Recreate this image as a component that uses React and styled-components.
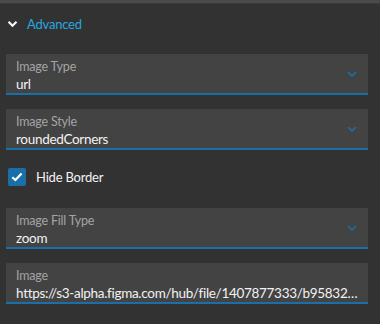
import React from 'react';
import styled, { createGlobalStyle } from 'styled-components';

const GlobalStyle = createGlobalStyle`
  html, body {
    margin: 0;
    padding: 0;
    background: #323232;
  }
  body {
    font-family: "Source Sans Pro", Lato, "Noto Sans", sans-serif;
  }
`;

const Panel = styled.div`
  width: 380px;
  height: 324px;
  background: #323232;
  overflow: hidden;
`;

const TopBar = styled.div`
  height: 3px;
  background: #4a4a4a;
  border-bottom: 1px solid #3b3b3b;
`;

const Body = styled.div`
  padding: 0 12px 0 6px;
`;

const Header = styled.div`
  height: 40px;
  display: flex;
  align-items: center;
  gap: 9px;
  padding-left: 1px;
  margin-bottom: 10px;
  color: #26a8e0;
  font-size: 13px;
  letter-spacing: -0.2px;
`;

const Field = styled.div`
  background: #434343;
  border-bottom: 2px solid #1b6fa8;
  padding: 5px 10px 0 10px;
  height: 34px;
  display: flex;
  align-items: flex-end;
  margin-bottom: 14px;
`;

const FieldText = styled.div`
  flex: 1;
  min-width: 0;
  display: flex;
  flex-direction: column;
  align-self: stretch;
`;

const Label = styled.div`
  font-size: 12.5px;
  line-height: 16px;
  color: #a3a3a3;
  letter-spacing: -0.2px;
`;

const Value = styled.div`
  font-size: 13.5px;
  line-height: 18px;
  color: #f2f2f2;
  letter-spacing: -0.3px;
  white-space: nowrap;
  overflow: hidden;
`;

const Caret = styled.svg`
  flex: none;
  margin: 0 1px 16px 8px;
`;

const CheckRow = styled.label`
  display: flex;
  align-items: center;
  gap: 10px;
  margin: 18px 0 22px 2px;
  color: #f2f2f2;
  font-size: 13px;
  letter-spacing: -0.2px;
`;

const Box = styled.span`
  width: 18px;
  height: 18px;
  border-radius: 2px;
  background: #1b6fa8;
  display: flex;
  align-items: center;
  justify-content: center;
`;

const Chevron = () => (
  <svg width="11" height="8" viewBox="0 0 11 8">
    <path d="M1.5 1.8 L5.5 5.8 L9.5 1.8" fill="none" stroke="#f5f5f5" strokeWidth="2.2" />
  </svg>
);

const SelectField = ({ label, value }) => (
  <Field>
    <FieldText>
      <Label>{label}</Label>
      <Value>{value}</Value>
    </FieldText>
    <Caret width="10" height="6" viewBox="0 0 10 6">
      <path d="M1 1 L5 5 L9 1" fill="none" stroke="#1b6fa8" strokeWidth="1.6" />
    </Caret>
  </Field>
);

const TextField = ({ label, value }) => (
  <Field>
    <FieldText>
      <Label>{label}</Label>
      <Value>{value}</Value>
    </FieldText>
  </Field>
);

export default function App() {
  return (
    <Panel>
      <GlobalStyle />
      <TopBar />
      <Body>
        <Header>
          <Chevron />
          Advanced
        </Header>
        <SelectField label="Image Type" value="url" />
        <SelectField label="Image Style" value="roundedCorners" />
        <CheckRow>
          <Box>
            <svg width="12" height="10" viewBox="0 0 12 10">
              <path d="M1.3 5.2 L4.4 8 L10.6 1.6" fill="none" stroke="#fff" strokeWidth="2.2" />
            </svg>
          </Box>
          Hide Border
        </CheckRow>
        <SelectField label="Image Fill Type" value="zoom" />
        <TextField
          label="Image"
          value="https://s3-alpha.figma.com/hub/file/1407877333/b95832…"
        />
      </Body>
    </Panel>
  );
}
